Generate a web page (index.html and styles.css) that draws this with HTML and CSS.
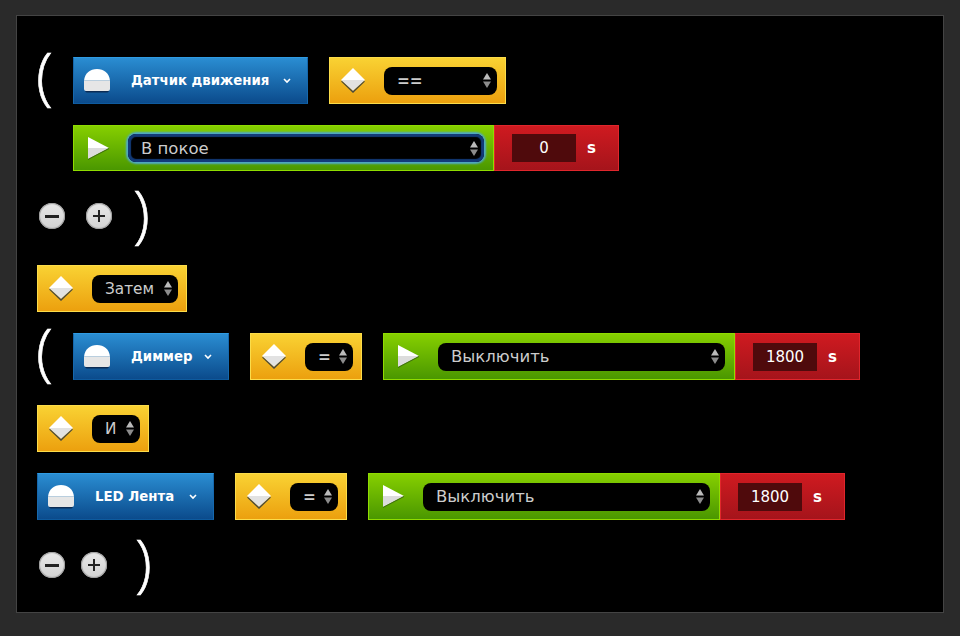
FILE: index.html
```html
<!DOCTYPE html>
<html lang="en">
  <head>
    <meta charset="UTF-8" />
    <title>Условие</title>
    <link rel="stylesheet" href="styles.css">
  </head>
  <body>
    <svg class="defs" width="0" height="0">
      <symbol id="dome" viewBox="0 0 26 24">
        <path fill="#fff" d="M0 11.500C1 4 6 0 13 0s12 4 13 11.500z" />
        <path fill="#e6e6e6" d="M0 11.500h26V20q0 2-2 2H2q-2 0-2-2z" />
        <path fill="#0b2c55" d="M1 22h24q-1 1.500-2 1.500H3Q2 23.500 1 22z" />
      </symbol>
      <symbol id="diamond" viewBox="0 0 24 25">
        <path fill="#fff" d="M12 0l12 12H0z" />
        <path fill="#e2e2e2" d="M0 12h24L12 23z" />
        <path fill="#4a4a3a" d="M1 13l11 10 11-10 1 .5L12 25 0 13.500z" />
      </symbol>
      <symbol id="play" viewBox="0 0 21 23">
        <path fill="#fff" d="M0 0l21 11H0z" />
        <path fill="#dcdcdc" d="M0 11h21L0 22z" />
        <path fill="#3d6b10" d="M0 22l21-11v1L0 23z" />
      </symbol>
      <symbol id="arrows" viewBox="0 0 8 15">
        <path fill="#bbb" d="M4 0l4 6.500H0z" />
        <path fill="#8c8c8c" d="M0 8.500h8L4 15z" />
      </symbol>
    </svg>

    <div id="editor">
      <div class="row">
        <span class="paren">(</span>
        <div class="block sensor">
          <svg class="icon-dome"><use href="#dome" /></svg>
          <span class="sensor-name name-motion">Датчик движения</span>
          <svg class="chevron" viewBox="0 0 8 6"><path d="M1 1l3 3 3-3" /></svg>
        </div>
        <div class="block op">
          <svg class="icon-diamond"><use href="#diamond" /></svg>
          <div class="select select-wide">
            <span class="select-text select-eq">==</span>
            <svg class="arrows"><use href="#arrows" /></svg>
          </div>
        </div>
      </div>

      <div class="row row-indent">
        <div class="group">
          <div class="block state state-first">
            <svg class="icon-play"><use href="#play" /></svg>
            <div class="select select-state select-focus">
              <span class="select-text">В покое</span>
              <svg class="arrows"><use href="#arrows" /></svg>
            </div>
          </div>
          <div class="block delay">
            <span class="delay-input">0</span>
            <span class="delay-unit">s</span>
          </div>
        </div>
      </div>

      <div class="row row-close">
        <span class="round-btn round-minus"></span>
        <span class="round-btn round-plus"></span>
        <span class="paren">)</span>
      </div>

      <div class="row">
        <div class="block op">
          <svg class="icon-diamond"><use href="#diamond" /></svg>
          <div class="select select-then">
            <span class="select-text">Затем</span>
            <svg class="arrows"><use href="#arrows" /></svg>
          </div>
        </div>
      </div>

      <div class="row row-loose">
        <span class="paren">(</span>
        <div class="block sensor">
          <svg class="icon-dome"><use href="#dome" /></svg>
          <span class="sensor-name name-dimmer">Диммер</span>
          <svg class="chevron" viewBox="0 0 8 6"><path d="M1 1l3 3 3-3" /></svg>
        </div>
        <div class="block op">
          <svg class="icon-diamond"><use href="#diamond" /></svg>
          <div class="select select-small">
            <span class="select-text select-eq">=</span>
            <svg class="arrows"><use href="#arrows" /></svg>
          </div>
        </div>
        <div class="group">
          <div class="block state">
            <svg class="icon-play"><use href="#play" /></svg>
            <div class="select select-state">
              <span class="select-text">Выключить</span>
              <svg class="arrows"><use href="#arrows" /></svg>
            </div>
          </div>
          <div class="block delay">
            <span class="delay-input">1800</span>
            <span class="delay-unit">s</span>
          </div>
        </div>
      </div>

      <div class="row">
        <div class="block op">
          <svg class="icon-diamond"><use href="#diamond" /></svg>
          <div class="select select-small">
            <span class="select-text">И</span>
            <svg class="arrows"><use href="#arrows" /></svg>
          </div>
        </div>
      </div>

      <div class="row">
        <div class="block sensor">
          <svg class="icon-dome"><use href="#dome" /></svg>
          <span class="sensor-name name-led">LED Лента</span>
          <svg class="chevron" viewBox="0 0 8 6"><path d="M1 1l3 3 3-3" /></svg>
        </div>
        <div class="block op">
          <svg class="icon-diamond"><use href="#diamond" /></svg>
          <div class="select select-small">
            <span class="select-text select-eq">=</span>
            <svg class="arrows"><use href="#arrows" /></svg>
          </div>
        </div>
        <div class="group">
          <div class="block state">
            <svg class="icon-play"><use href="#play" /></svg>
            <div class="select select-state">
              <span class="select-text">Выключить</span>
              <svg class="arrows"><use href="#arrows" /></svg>
            </div>
          </div>
          <div class="block delay">
            <span class="delay-input">1800</span>
            <span class="delay-unit">s</span>
          </div>
        </div>
      </div>

      <div class="row row-close row-close-last">
        <span class="round-btn round-minus"></span>
        <span class="round-btn round-plus"></span>
        <span class="paren">)</span>
      </div>
    </div>
  </body>
</html>
```

FILE: styles.css
```css
html,
body {
  height: 100%;
}
body {
  margin: 0;
  padding: 15px 16px 23px;
  box-sizing: border-box;
  background-color: #2a2a2a;
  font-family: "DejaVu Sans", sans-serif;
  overflow: hidden;
}
.defs {
  position: absolute;
}
#editor {
  height: 100%;
  box-sizing: border-box;
  padding: 41px 20px 0;
  background-color: #000;
  border: 1px solid #444;
  display: flex;
  flex-direction: column;
  gap: 21px;
}
.row {
  display: flex;
  align-items: center;
  gap: 21px;
  height: 47px;
}
.row-indent {
  height: 46px;
  margin-left: 36px;
  margin-bottom: 1px;
}
.row-indent .block {
  height: 46px;
}
.row-loose {
  margin-bottom: 4px;
}
.row-close {
  height: 56px;
  margin-top: -5px;
  margin-left: 2px;
}
.row-close-last {
  margin-top: -4px;
  gap: 16px;
}
.paren {
  width: 15px;
  margin-left: -1px;
  margin-right: 1px;
  font-family: "Open Sans", sans-serif;
  font-weight: 300;
  font-size: 62px;
  line-height: 47px;
  color: #fff;
  -webkit-text-stroke: 0.6px #fff;
  position: relative;
  top: -6px;
}
.row-close .paren {
  top: -4px;
  margin-left: 0;
}
.row-close-last .paren {
  margin-left: 12px;
}
.group {
  display: flex;
}
.block {
  display: flex;
  align-items: center;
  box-sizing: border-box;
  height: 47px;
  border: 1px solid;
}
.sensor {
  padding: 0 16px 0 10px;
  background: linear-gradient(#2a8dd2, #0b4b8c);
  border-color: #2f9be2 #1668ad #0d5a9e;
  color: #fff;
}
.sensor-name {
  font-size: 13.300px;
  font-weight: bold;
  margin: 0 14px 0 21px;
  white-space: nowrap;
}
.name-motion {
  width: 138px;
}
.name-dimmer {
  width: 59px;
}
.name-led {
  width: 80px;
}
.op {
  padding: 0 8px 0 11px;
  background: linear-gradient(#f9d233, #eca00e);
  border-color: #fbdc4a;
}
.state {
  padding: 0 9px 0 14px;
  background: linear-gradient(#86cf00, #4a9700);
  border-color: #8fdc00;
}
.delay {
  padding: 0 22.500px 0 17px;
  background: linear-gradient(#cf1a20, #a5141b);
  border-color: #e0262c;
}
.icon-dome {
  width: 26px;
  height: 24px;
}
.icon-diamond {
  width: 24px;
  height: 25px;
}
.icon-play {
  width: 21px;
  height: 23px;
}
.chevron {
  width: 8px;
  height: 6px;
  fill: none;
  stroke: #fff;
  stroke-width: 1.6;
}
.select {
  display: flex;
  align-items: center;
  justify-content: space-between;
  gap: 8px;
  box-sizing: border-box;
  height: 28px;
  margin-left: 19px;
  padding: 0 6px 0 13px;
  background-color: #000;
  border-radius: 8px;
  color: #ccc;
  font-size: 15.300px;
}
.select-wide {
  width: 113px;
}
.select-small {
  width: 48px;
}
.select-then {
  width: 86px;
}
.select-state {
  width: 287px;
  font-size: 16.500px;
}
.select-focus {
  width: 356px;
  box-shadow: inset 0 0 1px 3px #123a78, 0 0 2px 2px #4fa8c8;
}
.select-eq {
  font-weight: bold;
}
.arrows {
  width: 8px;
  height: 15px;
  flex-shrink: 0;
}
.delay-input {
  box-sizing: border-box;
  width: 64px;
  height: 28px;
  line-height: 28px;
  text-align: center;
  background-color: #4f0a0c;
  color: #fff;
  font-size: 15px;
}
.delay-unit {
  margin-left: 11px;
  color: #fff;
  font-size: 15px;
  font-weight: bold;
}
.round-btn {
  position: relative;
  width: 26px;
  height: 26px;
  flex-shrink: 0;
  border-radius: 50%;
  background: linear-gradient(#e8e8e8, #d2d2d2);
  box-shadow: inset 0 0 1px 1px #9a9a9a;
}
.round-minus::before,
.round-plus::before,
.round-plus::after {
  content: "";
  position: absolute;
  background-color: #222;
}
.round-minus::before {
  left: 6px;
  top: 11.500px;
  width: 14px;
  height: 3px;
}
.round-plus::before {
  left: 7px;
  top: 12px;
  width: 12px;
  height: 2px;
}
.round-plus::after {
  left: 12px;
  top: 7px;
  width: 2px;
  height: 12px;
}
```
